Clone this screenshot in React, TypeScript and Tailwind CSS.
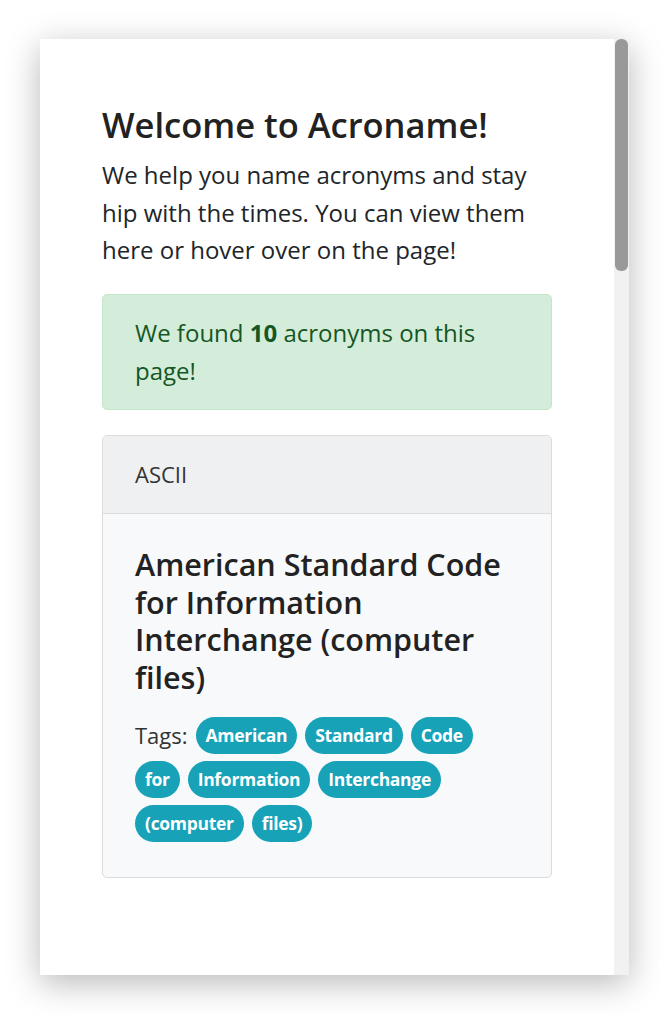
const tags = ["American", "Standard", "Code", "for", "Information", "Interchange", "(computer", "files)"];

export default function App() {
  return (
    <div className="w-[669px] h-[1015px] bg-white pt-[39px] pl-[40px] font-['Open_Sans',sans-serif] text-[#212529]">
      <div className="flex w-[589px] h-[936px] bg-white shadow-[0_8px_32px_rgba(0,0,0,0.28)]">
        <div className="flex-1 px-[62px] pt-[63px]">
          <h4 className="text-[34.5px] leading-[45px] font-semibold mb-[9px] text-[#222]">Welcome to Acroname!</h4>
          <p className="text-[24px] leading-[37.5px] mb-[25px]">
            We help you name acronyms and stay hip with the times. You can view them here or hover over on the page!
          </p>

          <div className="bg-[#d4edda] border border-[#c3e6cb] text-[#155724] rounded-[5px] px-[32px] py-[19.5px] text-[24px] leading-[37.5px] mb-[25px]">
            We found <b>10</b> acronyms on this page!
          </div>

          <div className="border-[1.5px] border-[#dcdcdc] rounded-[5px] bg-[#f8f9fa] overflow-hidden">
            <div className="bg-[#eff0f2] border-b-[1.5px] border-[#dcdcdc] px-[32px] py-[20px] text-[22px] leading-[37.5px] text-[#333]">
              ASCII
            </div>
            <div className="px-[32px] pt-[32px] pb-[35px]">
              <h5 className="text-[30.5px] leading-[37.5px] font-semibold mb-[21px] text-[#222]">
                American Standard Code for Information Interchange (computer files)
              </h5>
              <div className="flex flex-wrap items-center gap-x-[8px] gap-y-[7px] text-[22px] text-[#333]">
                <span>Tags:</span>
                {tags.map((t, i) => (
                  <span
                    key={i}
                    className="bg-[#17a2b8] text-white font-bold rounded-full h-[37px] px-[10px] flex items-center text-[17.5px] tracking-[-0.3px]"
                  >
                    {t}
                  </span>
                ))}
              </div>
            </div>
          </div>
        </div>
        <div className="w-[15px] bg-[#f1f1f1] px-[1px]">
          <div className="h-[232px] bg-[#999] rounded-[6px]" />
        </div>
      </div>
    </div>
  );
}
